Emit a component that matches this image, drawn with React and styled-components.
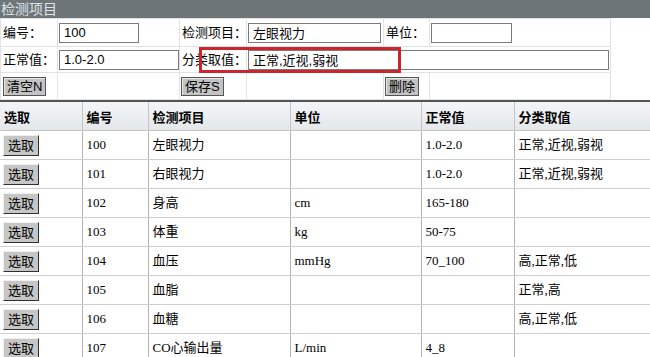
import styled, { createGlobalStyle } from "styled-components";

const GlobalStyle = createGlobalStyle`
	body {
		margin: 0;
		background: #fff;
		font-family: "Liberation Sans", "Noto Sans CJK SC", sans-serif;
		font-size: 13px;
		color: #000;
	}
`;

const Page = styled.div`
	width: 650px;
	height: 357px;
	overflow: hidden;
	position: relative;
`;

const TitleBar = styled.div`
	height: 18px;
	background: #6d7579;
	color: #dfe3e5;
	font-size: 14px;
	line-height: 18px;
	padding-left: 1px;
`;

const Form = styled.div`
	display: grid;
	grid-template-columns: 57px 122px 67px 137px 46px 181px;
	grid-template-rows: 28px 26px 27px;
	width: 610px;
	border-right: 1px solid #e2e2e2;
	border-bottom: 1px solid #e2e2e2;
`;

const Cell = styled.div`
	display: flex;
	align-items: center;
	padding-left: ${(p) => p.$pad ?? 2}px;
	border-left: 1px solid #e2e2e2;
	border-top: 1px solid #e2e2e2;
	grid-column: ${(p) => (p.$span ? `span ${p.$span}` : "auto")};
	line-height: 16px;
	white-space: nowrap;
`;

const Input = styled.input`
	box-sizing: border-box;
	width: ${(p) => p.$w}px;
	height: 20px;
	border: 1px solid #7a7a7a;
	padding: 0 4px;
	font-family: "Liberation Sans", "Noto Sans CJK SC", sans-serif;
	font-size: 13px;
	color: #000;
	background: #fff;
	outline: none;
`;

const FormButton = styled.button`
	box-sizing: border-box;
	height: 19px;
	padding: 0 3px;
	background: #c3c3c3;
	border: 1px solid #555;
	box-shadow: inset 1px 1px 0 #e8e8e8;
	font-family: "Liberation Sans", "Noto Sans CJK SC", sans-serif;
	font-size: 13px;
	line-height: 15px;
	color: #000;
`;

const Mark = styled.div`
	position: absolute;
	left: 199px;
	top: 47px;
	width: 202px;
	height: 26px;
	box-sizing: border-box;
	border: 3px solid #c9262f;
	pointer-events: none;
`;

const Table = styled.table`
	width: 650px;
	border-collapse: collapse;
	table-layout: fixed;
	border-top: 2px solid #555;
`;

const Th = styled.th`
	height: 28px;
	padding: 0 0 0 4px;
	text-align: left;
	font-size: 13px;
	font-weight: bold;
	background: linear-gradient(#f3f4f6, #e4e8eb);
	border-left: 1px solid #c4c4c4;
	border-bottom: 1px solid #c4c4c4;
	font-family: "Liberation Sans", "Noto Sans CJK SC", sans-serif;
	&:first-child {
		border-left: none;
	}
`;

const Td = styled.td`
	height: 28px;
	padding: 0 0 0 4px;
	font-family: "Liberation Serif", "Noto Sans CJK SC", serif;
	font-size: 13px;
	line-height: 16px;
	border-left: 1px solid #b4b4b4;
	border-bottom: 1px solid #cfcfcf;
	white-space: nowrap;
	overflow: hidden;
	&:first-child {
		border-left: none;
		padding-left: 3px;
	}
`;

const PickButton = styled.button`
	box-sizing: border-box;
	width: 36px;
	height: 21px;
	padding: 0;
	background: #c6c6c6;
	border: 1px solid;
	border-color: #f0f0f0 #303030 #303030 #f0f0f0;
	font-family: "Liberation Sans", "Noto Sans CJK SC", sans-serif;
	font-size: 13px;
	line-height: 17px;
	color: #000;
	display: block;
`;

const rows = [
	["100", "左眼视力", "", "1.0-2.0", "正常,近视,弱视"],
	["101", "右眼视力", "", "1.0-2.0", "正常,近视,弱视"],
	["102", "身高", "cm", "165-180", ""],
	["103", "体重", "kg", "50-75", ""],
	["104", "血压", "mmHg", "70_100", "高,正常,低"],
	["105", "血脂", "", "", "正常,高"],
	["106", "血糖", "", "", "高,正常,低"],
	["107", "CO心输出量", "L/min", "4_8", ""],
];

export default function App() {
	return (
		<Page>
			<GlobalStyle />
			<TitleBar>检测项目</TitleBar>
			<Form>
				<Cell>编号：</Cell>
				<Cell $pad={1}><Input $w={80} defaultValue="100" /></Cell>
				<Cell>检测项目：</Cell>
				<Cell $pad={1}><Input $w={133} defaultValue="左眼视力" /></Cell>
				<Cell>单位：</Cell>
				<Cell $pad={1}><Input $w={81} defaultValue="" /></Cell>

				<Cell>正常值：</Cell>
				<Cell $pad={1}><Input $w={120} defaultValue="1.0-2.0" /></Cell>
				<Cell>分类取值：</Cell>
				<Cell $span={3} $pad={1}><Input $w={361} defaultValue="正常,近视,弱视" /></Cell>

				<Cell $pad={2}><FormButton>清空N</FormButton></Cell>
				<Cell />
				<Cell $pad={1}><FormButton>保存S</FormButton></Cell>
				<Cell />
				<Cell $pad={1}><FormButton>删除</FormButton></Cell>
				<Cell />
			</Form>
			<Mark />
			<Table>
				<colgroup>
					<col style={{ width: 82 }} />
					<col style={{ width: 66 }} />
					<col style={{ width: 142 }} />
					<col style={{ width: 131 }} />
					<col style={{ width: 93 }} />
					<col style={{ width: 136 }} />
				</colgroup>
				<thead>
					<tr>
						<Th>选取</Th>
						<Th>编号</Th>
						<Th>检测项目</Th>
						<Th>单位</Th>
						<Th>正常值</Th>
						<Th>分类取值</Th>
					</tr>
				</thead>
				<tbody>
					{rows.map((r) => (
						<tr key={r[0]}>
							<Td><PickButton>选取</PickButton></Td>
							{r.map((v, i) => (
								<Td key={i}>{v}</Td>
							))}
						</tr>
					))}
				</tbody>
			</Table>
		</Page>
	);
}
